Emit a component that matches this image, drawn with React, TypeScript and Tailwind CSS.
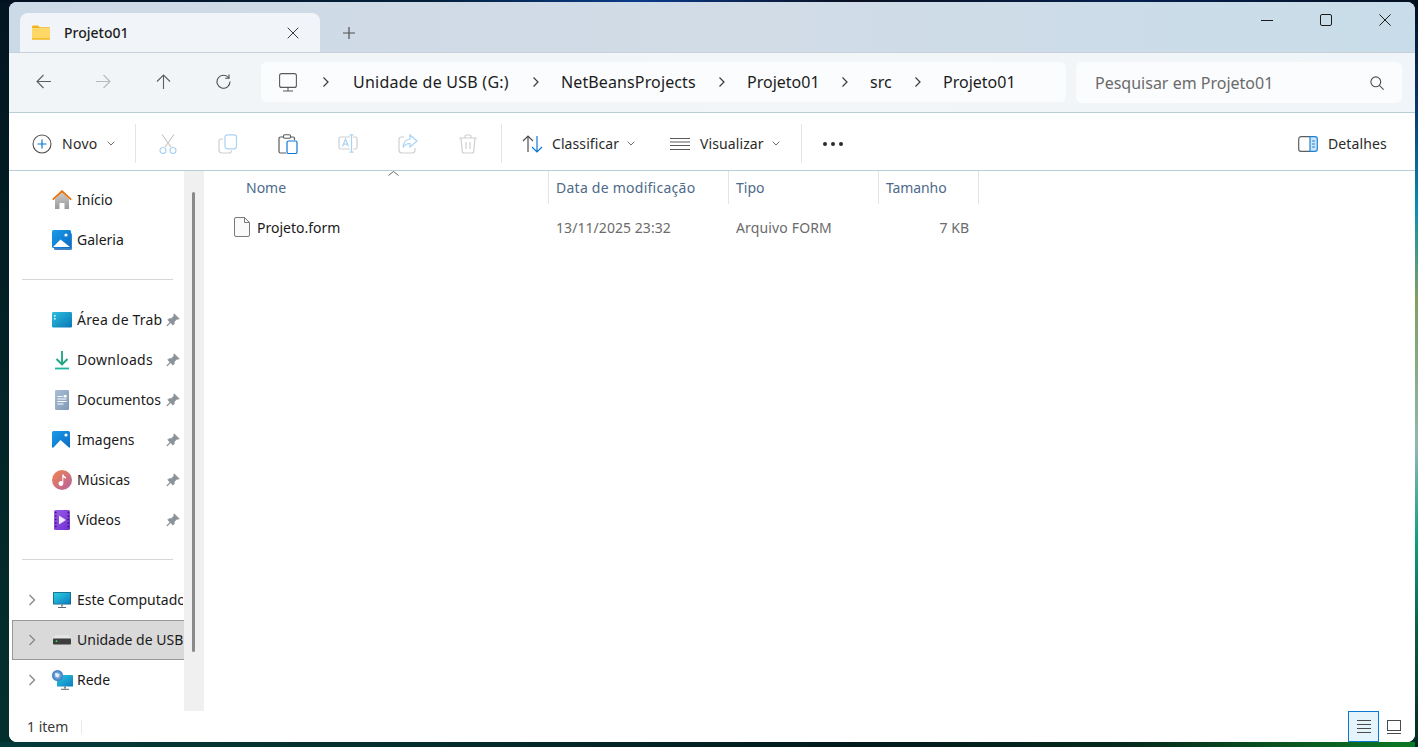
import React from "react";

const F = { fontFamily: '"Noto Sans", "Open Sans", sans-serif' };

function Chev({ cls = "" }: { cls?: string }) {
  return (
    <svg width="8" height="12" viewBox="0 0 8 12" className={cls} fill="none" stroke="#3a3a3a" strokeWidth="1.2">
      <path d="M1.500 1.500 6 6 1.500 10.500" />
    </svg>
  );
}
function Down() {
  return (
    <svg width="8" height="5" viewBox="0 0 8 5" fill="none" stroke="#6b6b6b" strokeWidth="1">
      <path d="M.7.7 4 4 7.3.7" />
    </svg>
  );
}
function Pin() {
  return (
    <svg width="14" height="14" viewBox="0 0 14 14" fill="#8b9299" stroke="#8b9299" strokeWidth=".6" strokeLinejoin="round">
      <path d="M8.2.8 13.200 5.800 12 6.400 11.200 6 8.400 8.600 8.200 11 7 12.200 4.600 9.800 1.600 12.800.8 13l.2-.8 3-3L1.700 6.900 2.900 5.700 5.400 5.500 8 2.800 7.600 2z" />
    </svg>
  );
}
function Gallery({ shadow = false }: { shadow?: boolean }) {
  return (
    <svg width="20" height="20" viewBox="0 0 20 20">
      <defs>
        <linearGradient id={shadow ? "ga" : "gb"} x1="0" y1="0" x2="1" y2="1">
          <stop offset="0" stopColor="#1a9bea" />
          <stop offset="1" stopColor="#0a6cc4" />
        </linearGradient>
      </defs>
      {shadow && <rect x="2" y="3" width="18" height="17" rx="1.5" fill="#3b83c8" />}
      <rect x="0" y={shadow ? 0 : 1} width={shadow ? 19 : 18} height={shadow ? 18 : 17} rx="1.5" fill={shadow ? "url(#ga)" : "url(#gb)"} />
      <circle cx="14" cy="5" r="1.6" fill="#fff" />
      <path d={shadow ? "M1 17 8.5 9.5 18 17z" : "M1 18 8.5 10 17.5 18z"} fill="#fff" />
    </svg>
  );
}

const icons: Record<string, React.ReactNode> = {
  home: (
    <svg width="20" height="20" viewBox="0 0 20 20">
      <defs>
        <linearGradient id="hb" x1="0" y1="0" x2="0" y2="1">
          <stop offset="0" stopColor="#c9c9c9" />
          <stop offset="1" stopColor="#9a9a9a" />
        </linearGradient>
      </defs>
      <path d="M3 9 10 2.500 17 9v10h-4.500v-6h-5v6H3z" fill="url(#hb)" />
      <path d="M.8 9.600 10 1.200l9.200 8.400" fill="none" stroke="#e8740c" strokeWidth="1.9" />
    </svg>
  ),
  gallery: <Gallery shadow />,
  desktop: (
    <svg width="20" height="16" viewBox="0 0 20 16">
      <defs>
        <linearGradient id="db" x1="0" y1="0" x2="1" y2="1">
          <stop offset="0" stopColor="#2cc0dc" />
          <stop offset="1" stopColor="#0a75b8" />
        </linearGradient>
      </defs>
      <rect width="20" height="15.5" rx="1.2" fill="url(#db)" />
      <rect x="2" y="3" width="1.6" height="1.6" fill="#dff6fb" />
      <rect x="2" y="6" width="1.6" height="1.6" fill="#dff6fb" />
    </svg>
  ),
  downloads: (
    <svg width="20" height="20" viewBox="0 0 20 20" fill="none">
      <path d="M10 1v13" stroke="#16a37f" strokeWidth="1.8" />
      <path d="M4.500 9 10 14.500 15.500 9" stroke="#16a37f" strokeWidth="1.8" />
      <path d="M3 18.500h14" stroke="#1cb6a0" strokeWidth="1.8" />
    </svg>
  ),
  docs: (
    <svg width="14" height="20" viewBox="0 0 14 20">
      <defs>
        <linearGradient id="dc" x1="0" y1="0" x2="1" y2="1">
          <stop offset="0" stopColor="#a9bfd6" />
          <stop offset="1" stopColor="#7f98b5" />
        </linearGradient>
      </defs>
      <rect width="14" height="20" rx="1.2" fill="url(#dc)" />
      <path d="M2.500 6.500h5M2.500 9h9M2.500 11.500h9M2.500 14h6" stroke="#fff" strokeWidth="1" />
      <rect x="8.6" y="5" width="3" height="2.5" fill="#fff" />
    </svg>
  ),
  images: <Gallery />,
  music: (
    <svg width="20" height="20" viewBox="0 0 20 20">
      <defs>
        <linearGradient id="mb" x1="0" y1="0" x2="1" y2="1">
          <stop offset="0" stopColor="#f0864e" />
          <stop offset="1" stopColor="#b55fa0" />
        </linearGradient>
      </defs>
      <circle cx="10" cy="10" r="10" fill="url(#mb)" />
      <path d="M10.300 4.500h1.400c.2 1.500 1.200 2.200 2.300 2.400v1.500c-1.200-.1-2.200-.6-2.700-1.200v6.200c0 1.500-1.100 2.600-2.500 2.600S6.500 14.900 6.500 13.600s1.100-2.500 2.400-2.500c.5 0 1 .1 1.400.4z" fill="#fff" />
    </svg>
  ),
  video: (
    <svg width="16" height="20" viewBox="0 0 16 20">
      <defs>
        <linearGradient id="vb" x1="0" y1="0" x2="1" y2="1">
          <stop offset="0" stopColor="#9a5de8" />
          <stop offset="1" stopColor="#6f2fd0" />
        </linearGradient>
      </defs>
      <rect width="16" height="20" rx="1.5" fill="url(#vb)" />
      <path d="M1 2.500h1.500M1 6h1.500M1 9.500h1.500M1 13h1.500M1 16.500h1.500M13.500 2.500H15M13.500 6H15M13.500 9.500H15M13.500 13H15M13.500 16.500H15" stroke="#34185f" strokeWidth="1.5" />
      <path d="M5 5.500 12 10 5 14.500z" fill="#f1e8ff" />
    </svg>
  ),
  pc: (
    <svg width="18" height="16" viewBox="0 0 18 16">
      <defs>
        <linearGradient id="pb" x1="0" y1="0" x2="1" y2="1">
          <stop offset="0" stopColor="#2cd0e0" />
          <stop offset="1" stopColor="#0b7cc0" />
        </linearGradient>
      </defs>
      <rect width="18" height="12.5" rx=".6" fill="#15607f" />
      <rect x=".8" y=".8" width="16.4" height="11" fill="url(#pb)" />
      <path d="M8 12.500h2v2H8z" fill="#7d8a92" />
      <path d="M5 15h8v1H5z" fill="#5b6770" />
    </svg>
  ),
  usb: (
    <svg width="18" height="10" viewBox="0 0 18 10">
      <path d="M2.500 0h13L18 3.500H0z" fill="#e4e4e4" />
      <rect y="3.5" width="18" height="6" rx=".8" fill="#3d3d3d" />
      <circle cx="3.5" cy="6.2" r=".9" fill="#35e05a" />
    </svg>
  ),
  net: (
    <svg width="21" height="20" viewBox="0 0 21 20">
      <defs>
        <linearGradient id="nb" x1="0" y1="0" x2="1" y2="1">
          <stop offset="0" stopColor="#2cc8e0" />
          <stop offset="1" stopColor="#0b7cc0" />
        </linearGradient>
        <radialGradient id="ng">
          <stop offset="0" stopColor="#a7cdf0" />
          <stop offset="1" stopColor="#3a78c0" />
        </radialGradient>
      </defs>
      <rect x="5" y="5" width="16" height="11.5" rx=".6" fill="url(#nb)" />
      <path d="M12 16.500h2v2h-2z" fill="#7d8a92" />
      <path d="M9 18.800h8v1H9z" fill="#5b6770" />
      <circle cx="5.5" cy="5.5" r="5.5" fill="url(#ng)" />
      <path d="M3 3.500c2-1 3.500 0 4.500 1.500L6 7.500 3.500 6.500z" fill="#e4eff8" />
    </svg>
  ),
};

function NavRow({ icon, label, pin, chev, sel, track = "" }: { icon: string; label: string; pin?: boolean; chev?: boolean; sel?: boolean; track?: string }) {
  return (
    <div className={`h-[40px] flex items-center ml-[3px] border ${sel ? "bg-[#d9d9d9] border-[#999999] border-r-0" : "border-transparent"}`}>
      <div className="w-[37px] h-full flex items-center justify-start pl-[15px] shrink-0">
        {chev && (
          <svg width="8" height="12" viewBox="0 0 8 12" fill="none" stroke="#8a8a8a" strokeWidth="1.4">
            <path d="M1.500 1 6.500 6 1.500 11" />
          </svg>
        )}
      </div>
      <div className="w-[24px] flex items-center justify-center shrink-0">{icons[icon]}</div>
      <div className={`text-[14px] pb-[2px] text-[#1a1a1a] whitespace-nowrap overflow-hidden ml-[3px] ${pin ? "w-[85px]" : "flex-1"} ${track}`}>{label}</div>
      {pin && (
        <div className="ml-[4px] shrink-0 flex">
          <Pin />
        </div>
      )}
    </div>
  );
}

function Crumb({ label, w, track = "" }: { label: string; w: string; track?: string }) {
  return (
    <div className={`flex items-center shrink-0 ${w}`}>
      <span className={`flex-1 text-[16px] text-[#1c1c1c] whitespace-nowrap ${track}`}>{label}</span>
      <Chev cls="mr-[21px] shrink-0" />
    </div>
  );
}

function Header({ label, w, pl, track = "" }: { label: string; w: string; pl: string; track?: string }) {
  return (
    <div className={`h-[33px] border-r border-[#e5e5e5] flex items-center shrink-0 text-[14px] text-[#4d6a8a] ${w} ${pl} ${track}`}>{label}</div>
  );
}

export default function App() {
  return (
    <div
      className="w-[1418px] h-[747px] overflow-hidden pl-[9px] pt-[2px] [background:linear-gradient(180deg,#020c1c_0%,#0a3a70_15%,#0a90b0_28%,#7fa060_40%,#90b8b0_60%,#10a080_72%,#0a5a40_85%,#03281f_100%)_right/3px_100%_no-repeat,linear-gradient(90deg,#043a3a_0%,#04302e_25%,#02191c_60%,#062a1c_80%,#0c7a24_100%)_bottom/100%_5px_no-repeat,linear-gradient(90deg,#021020_0%,#03203a_30%,#0a3a8a_45%,#0a1020_60%,#052050_80%,#031020_100%)_top/100%_2px_no-repeat,linear-gradient(180deg,#021520_0%,#04302e_100%)]"
      style={F}
    >
      <div className="w-[1406px] h-[740px] rounded-lg overflow-hidden flex flex-col bg-white">
        {/* title bar */}
        <div className="h-[50px] shrink-0 flex pl-[11px] pt-[11px] bg-[linear-gradient(90deg,#ccd9e6_0%,#d2dce7_50%,#c8dde9_100%)]">
          <div className="w-[300px] h-[39px] rounded-t-lg bg-[#f1f5f9] flex items-center pl-[12px] shrink-0">
            <svg width="18" height="15" viewBox="0 0 19 15" className="shrink-0">
              <path d="M0 1.500C0 .7.6 0 1.400 0h4.800l2 2H19v1H0z" fill="#f3b31c" />
              <rect y="3" width="19" height="12" rx=".8" fill="#fdd866" />
              <rect y="13.6" width="19" height="1.4" fill="#f3b31c" />
            </svg>
            <span className="ml-[14px] text-[14px] font-medium text-[#1c1c1c]">Projeto01</span>
            <svg width="12" height="12" viewBox="0 0 12 12" className="ml-auto mr-[21px]" stroke="#3c3c3c" strokeWidth="1">
              <path d="M.7.7l10.600 10.600M11.300.7.7 11.300" />
            </svg>
          </div>
          <svg width="12" height="12" viewBox="0 0 12 12" className="ml-[23px] mt-[14px] shrink-0" stroke="#505050" strokeWidth="1.2">
            <path d="M6 0v12M0 6h12" />
          </svg>
          <div className="ml-auto flex h-[14px] items-center pr-[24px]">
            <div className="w-[12px] h-px bg-[#1c1c1c]" />
            <div className="w-[12px] h-[12px] ml-[47px] border border-[#1c1c1c] rounded-[2px]" />
            <svg width="12" height="12" viewBox="0 0 12 12" className="ml-[47px]" stroke="#1c1c1c" strokeWidth="1">
              <path d="M.4.4l11.200 11.200M11.600.4.4 11.600" />
            </svg>
          </div>
        </div>
        {/* nav bar */}
        <div className="h-[61px] shrink-0 border-t border-[#c8d1d9] border-b-[#b8cdd6] border-b flex items-center pl-[252px] relative bg-[linear-gradient(90deg,#f2f5f8_0%,#f3f6f9_60%,#eff5f8_100%)]">
          <div className="absolute left-[27px] top-[21px] flex gap-[45px]">
            <svg width="15" height="15" viewBox="0 0 15 15" fill="none" stroke="#5e5e5e" strokeWidth="1.1">
              <path d="M15 7.500H1M7.500 1 1 7.500 7.500 14" />
            </svg>
            <svg width="15" height="15" viewBox="0 0 15 15" fill="none" stroke="#b9b9b9" strokeWidth="1.1">
              <path d="M0 7.500h14M7.500 1 14 7.500 7.500 14" />
            </svg>
            <svg width="15" height="15" viewBox="0 0 15 15" fill="none" stroke="#5e5e5e" strokeWidth="1.1">
              <path d="M7.500 15V1M1 7.500 7.500 1 14 7.500" />
            </svg>
            <svg width="15" height="15" viewBox="0 0 15 15" fill="none" stroke="#4a4a4a" strokeWidth="1.1">
              <path d="M12.800 4A6.500 6.500 0 1 0 14 7.500" />
              <path d="M13 .5V4.300H9.200" />
            </svg>
          </div>
          <div className="w-[805px] h-[40px] rounded-md bg-[#fbfcfe] flex items-center shrink-0 -mt-[1px]">
            <svg width="18" height="19" viewBox="0 0 18 19" className="ml-[18px] shrink-0" fill="none" stroke="#5a5a5a" strokeWidth="1.1">
              <rect x=".6" y=".6" width="16.8" height="13.8" rx="2" />
              <path d="M9 14.500v3M4 18h10" />
            </svg>
            <Chev cls="ml-[25px] mr-[23px] shrink-0" />
            <Crumb label="Unidade de USB (G:)" w="w-[208px]" track="tracking-[0.25px]" />
            <Crumb label="NetBeansProjects" w="w-[186px]" track="tracking-[0.12px]" />
            <Crumb label="Projeto01" w="w-[123px]" />
            <Crumb label="src" w="w-[73px]" />
            <span className="text-[16px] text-[#1c1c1c] whitespace-nowrap">Projeto01</span>
          </div>
          <div className="ml-[10px] w-[326px] h-[41px] rounded-md bg-[#fbfcfe] flex items-center pl-[19px] shrink-0">
            <span className="text-[16px] text-[#6a6a6a] whitespace-nowrap">Pesquisar em Projeto01</span>
            <svg width="14" height="14" viewBox="0 0 14 14" className="ml-auto mr-[18px]" fill="none" stroke="#4f4f4f" strokeWidth="1.1">
              <circle cx="5.8" cy="5.8" r="4.9" />
              <path d="M9.400 9.400 13.600 13.600" />
            </svg>
          </div>
        </div>
        {/* toolbar */}
        <div className="h-[58px] shrink-0 bg-white border-b border-[#b8cdd6] flex items-center pt-[4px] text-[14px] text-[#2a2a2a]">
          <svg width="20" height="20" viewBox="0 0 20 20" className="ml-[23px] shrink-0" fill="none">
            <circle cx="10" cy="10" r="9" stroke="#505050" strokeWidth="1.1" />
            <path d="M10 5.500v9M5.500 10h9" stroke="#0a78d4" strokeWidth="1.2" />
          </svg>
          <span className="ml-[10px] w-[37px] tracking-[0.3px] shrink-0">Novo</span>
          <span className="ml-[8px] flex"><Down /></span>
          <div className="ml-[20px] w-px h-[39px] bg-[#e5e5e5] shrink-0" />
          <div className="ml-[22px] flex items-center gap-[40px] shrink-0">
            <svg width="20" height="20" viewBox="0 0 20 20" fill="none">
              <path d="M4 .5 13 13M16 .5 7 13" stroke="#c4c4c4" strokeWidth="1.1" />
              <circle cx="5" cy="16.5" r="3" stroke="#a9d2f3" strokeWidth="1.2" />
              <circle cx="15" cy="16.5" r="3" stroke="#a9d2f3" strokeWidth="1.2" />
            </svg>
            <svg width="20" height="20" viewBox="0 0 20 20" fill="none">
              <path d="M5 5H3a2 2 0 0 0-2 2v9a3 3 0 0 0 3 3h7a2.500 2.500 0 0 0 2.500-2.500" stroke="#cfcfcf" strokeWidth="1.2" />
              <rect x="7" y=".8" width="11.500" height="14" rx="2.500" stroke="#a9d2f3" strokeWidth="1.2" />
            </svg>
            <svg width="20" height="20" viewBox="0 0 20 20" fill="none">
              <path d="M8 19H2.500A1.500 1.500 0 0 1 1 17.500V4.500A1.500 1.500 0 0 1 2.500 3H15a1.500 1.500 0 0 1 1.500 1.500V6" stroke="#5a5a5a" strokeWidth="1.2" />
              <rect x="5.500" y=".8" width="7" height="3.500" rx="1.200" stroke="#5a5a5a" strokeWidth="1.1" fill="#fff" />
              <rect x="9" y="7" width="10" height="12.500" rx="1.500" stroke="#0a78d4" strokeWidth="1.2" fill="#fff" />
            </svg>
            <svg width="20" height="20" viewBox="0 0 20 20" fill="none">
              <path d="M12 3H2.500A1.500 1.500 0 0 0 1 4.500v9A1.500 1.500 0 0 0 2.500 15H12M15 3h2.500A1.500 1.500 0 0 1 19 4.500v9a1.500 1.500 0 0 1-1.500 1.500H15" stroke="#cfcfcf" strokeWidth="1.2" />
              <path d="M4.500 12.500 7.500 5l3 7.500M5.500 10.200h4M13.500 1v17M11.500.8h4M11.500 18.200h4" stroke="#a9d2f3" strokeWidth="1.2" />
            </svg>
            <svg width="20" height="20" viewBox="0 0 20 20" fill="none">
              <path d="M6 3H3a2 2 0 0 0-2 2v11a3 3 0 0 0 3 3h10a3 3 0 0 0 3-3v-2" stroke="#cfcfcf" strokeWidth="1.2" />
              <path d="M12 1l7 6-7 6V9.500c-3.500 0-5.500 1.500-7 4 .3-5 3-8 7-8.500z" stroke="#a9d2f3" strokeWidth="1.2" />
            </svg>
            <svg width="20" height="20" viewBox="0 0 20 20" fill="none" stroke="#cfcfcf" strokeWidth="1.2">
              <path d="M1 4h18M7 4V2.500A1.500 1.500 0 0 1 8.500 1h3A1.500 1.500 0 0 1 13 2.500V4M3 4l1.300 13.500A2 2 0 0 0 6.300 19h7.400a2 2 0 0 0 2-1.500L17 4M8 8v7M12 8v7" />
            </svg>
          </div>
          <div className="ml-[23px] w-px h-[39px] bg-[#e5e5e5] shrink-0" />
          <svg width="21" height="18" viewBox="0 0 21 18" className="ml-[20px] shrink-0" fill="none" strokeWidth="1.2">
            <path d="M6 17V1M1 6l5-5 5 5" stroke="#505050" />
            <path d="M15 1v16M10 12l5 5 5-5" stroke="#0a78d4" />
          </svg>
          <span className="ml-[9px] w-[67px] shrink-0 tracking-[0.08px]">Classificar</span>
          <span className="ml-[8px] flex"><Down /></span>
          <svg width="20" height="12" viewBox="0 0 20 12" className="ml-[35px] shrink-0" fill="none" stroke="#5a5a5a" strokeWidth="1">
            <path d="M0 .5h20M0 4h20M0 7.500h20M0 11.500h20" />
          </svg>
          <span className="ml-[10px] w-[64px] shrink-0 tracking-[0.1px]">Visualizar</span>
          <span className="ml-[8px] flex"><Down /></span>
          <div className="ml-[21px] w-px h-[39px] bg-[#e5e5e5] shrink-0" />
          <div className="ml-[21px] flex gap-[4px] shrink-0">
            <div className="w-[4px] h-[4px] rounded-full bg-[#2a2a2a]" />
            <div className="w-[4px] h-[4px] rounded-full bg-[#2a2a2a]" />
            <div className="w-[4px] h-[4px] rounded-full bg-[#2a2a2a]" />
          </div>
          <svg width="20" height="16" viewBox="0 0 20 16" className="ml-auto shrink-0" fill="none">
            <path d="M12 .7H3A2.300 2.300 0 0 0 .7 3v10A2.300 2.300 0 0 0 3 15.300h9" stroke="#5e5e5e" strokeWidth="1.2" />
            <path d="M12 .7h5A2.300 2.300 0 0 1 19.300 3v10a2.300 2.300 0 0 1-2.300 2.300h-5z" stroke="#1a82d8" strokeWidth="1.2" fill="#cfe6f9" />
            <path d="M14 5h3M14 8h3M14 11h3" stroke="#1a82d8" strokeWidth="1" />
          </svg>
          <span className="ml-[10px] mr-[28px] w-[59px] shrink-0 whitespace-nowrap tracking-[0.1px]">Detalhes</span>
        </div>
        {/* content */}
        <div className="h-[540px] shrink-0 flex">
          <div className="w-[175px] shrink-0 pt-[9px] overflow-hidden">
            <NavRow icon="home" label="Início" />
            <NavRow icon="gallery" label="Galeria" />
            <div className="h-px bg-[#d6d6d6] ml-[13px] w-[151px] mt-[19px] mb-[20px]" />
            <NavRow icon="desktop" label="Área de Trab" pin track="tracking-[0.2px]" />
            <NavRow icon="downloads" label="Downloads" pin track="tracking-[0.3px]" />
            <NavRow icon="docs" label="Documentos" pin />
            <NavRow icon="images" label="Imagens" pin />
            <NavRow icon="music" label="Músicas" pin />
            <NavRow icon="video" label="Vídeos" pin />
            <div className="h-px bg-[#d6d6d6] ml-[13px] w-[151px] mt-[19px] mb-[20px]" />
            <NavRow icon="pc" label="Este Computador" chev />
            <NavRow icon="usb" label="Unidade de USB (G:)" chev sel />
            <NavRow icon="net" label="Rede" chev />
          </div>
          <div className="w-[20px] shrink-0 bg-[#f0f0f0] pt-[21px] pl-[8px]">
            <div className="w-[3px] h-[460px] rounded-full bg-[#8a8a8a]" />
          </div>
          <div className="flex-1 min-w-0">
            <div className="flex relative">
              <Header label="Nome" w="w-[345px]" pl="pl-[42px]" />
              <Header label="Data de modificação" w="w-[180px]" pl="pl-[7px]" track="tracking-[0.25px]" />
              <Header label="Tipo" w="w-[150px]" pl="pl-[7px]" />
              <Header label="Tamanho" w="w-[100px]" pl="pl-[7px]" track="tracking-[-0.1px]" />
              <svg width="11" height="5" viewBox="0 0 11 5" className="absolute left-[184px] top-0" fill="none" stroke="#6b6b6b" strokeWidth="1">
                <path d="M.5 4.500 5.500.5l5 4" />
              </svg>
            </div>
            <div className="flex items-center h-[46px] text-[14px] text-[#6b6b6b]">
              <div className="w-[345px] flex items-center pl-[30px] shrink-0">
                <svg width="16" height="20" viewBox="0 0 16 20" className="shrink-0" fill="#fafafa" stroke="#7a7a7a" strokeWidth="1">
                  <path d="M.5 2A1.500 1.500 0 0 1 2 .5h8.500l5 5V18a1.500 1.500 0 0 1-1.500 1.500H2A1.500 1.500 0 0 1 .5 18z" />
                  <path d="M10.500.5v5h5" fill="none" />
                </svg>
                <span className="ml-[7px] text-[#1a1a1a]">Projeto.form</span>
              </div>
              <div className="w-[180px] pl-[7px] shrink-0 tracking-[0.06px]">13/11/2025 23:32</div>
              <div className="w-[150px] pl-[7px] shrink-0 tracking-[0.15px]">Arquivo FORM</div>
              <div className="w-[100px] pr-[10px] text-right shrink-0">7 KB</div>
            </div>
          </div>
        </div>
        {/* status */}
        <div className="flex-1 flex items-center bg-white">
          <span className="ml-[18px] text-[14px] text-[#3a3a3a]">1 item</span>
          <div className="ml-[13px] w-px h-[14px] bg-[#e8e8e8]" />
          <div className="ml-auto flex items-center mr-[14px]">
            <div className="w-[31px] h-[31px] bg-[#e5f3fb] border border-[#0a78d4] flex items-center justify-center">
              <svg width="14" height="13" viewBox="0 0 14 13" fill="none" stroke="#4a4a4a" strokeWidth="1">
                <path d="M0 .5h14M0 4.500h14M0 8.500h14M0 12.500h14" />
              </svg>
            </div>
            <svg width="14" height="14" viewBox="0 0 14 14" className="ml-[8px]" fill="none" stroke="#4a4a4a" strokeWidth="1">
              <rect x=".5" y=".5" width="13" height="10" />
              <path d="M0 13.500h14" />
            </svg>
          </div>
        </div>
      </div>
    </div>
  );
}
